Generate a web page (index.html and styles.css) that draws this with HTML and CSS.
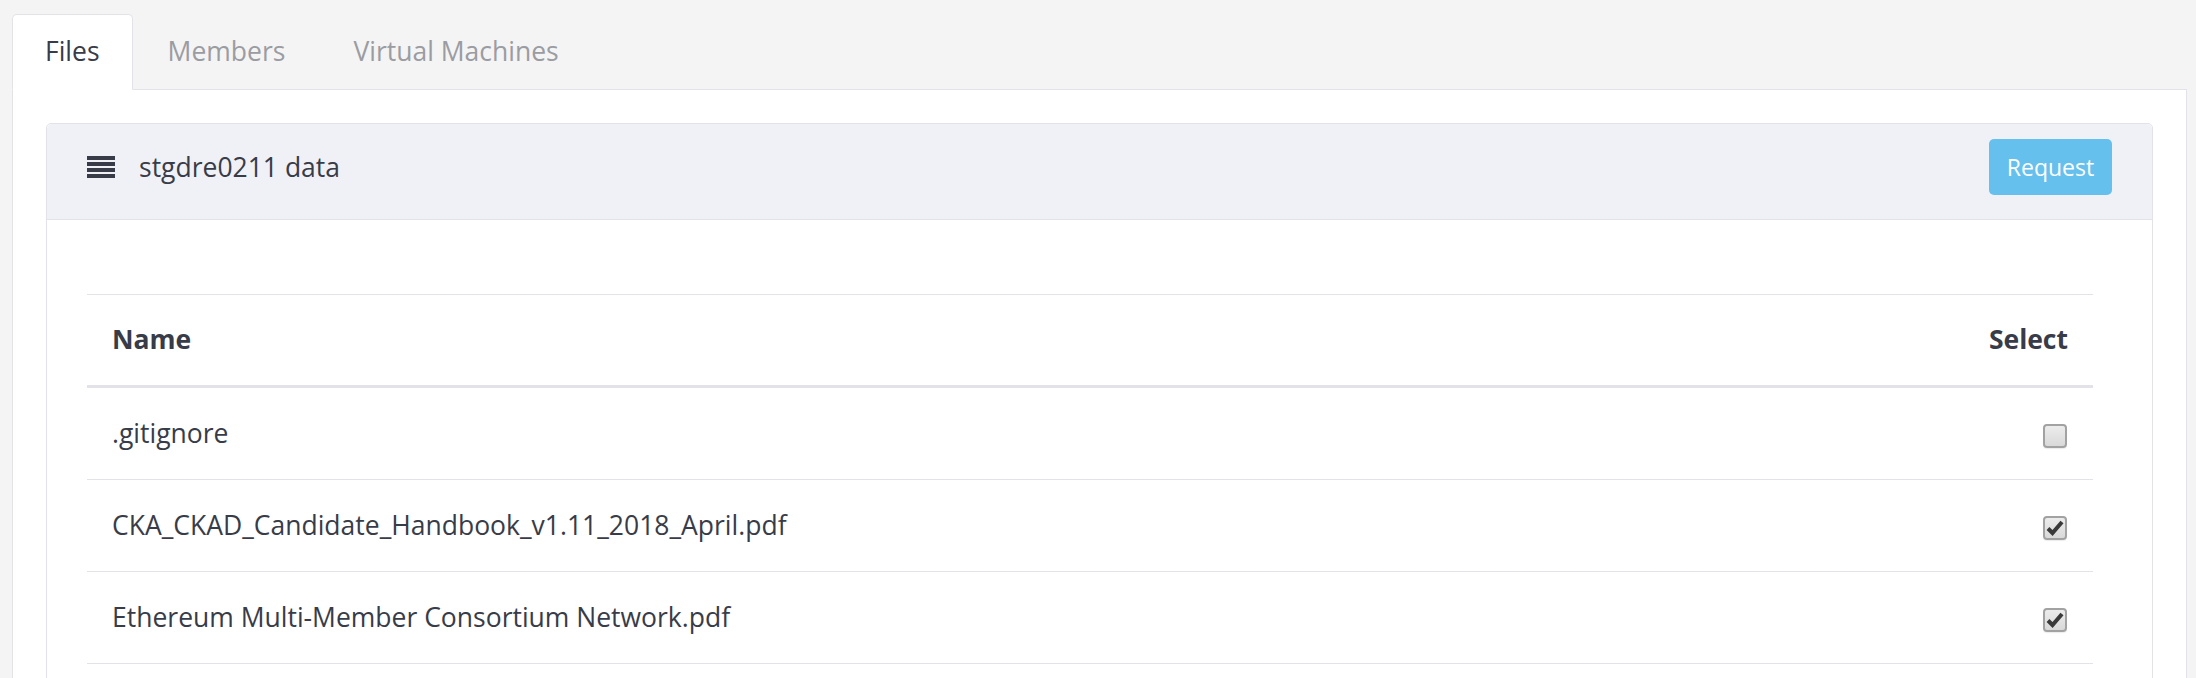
FILE: index.html
```html
<!DOCTYPE html>
<html lang="en">
<head>
    <meta charset="UTF-8">
    <meta name="viewport" content="width=device-width, initial-scale=1.0">
    <title>stgdre0211 data</title>
    <link rel="stylesheet" href="styles.css">
</head>
<body>

<div class="panel">
    <ul class="tabs">
        <li class="tab active">Files</li>
        <li class="tab">Members</li>
        <li class="tab">Virtual Machines</li>
    </ul>

    <div class="tab-content">
        <div class="card">
            <div class="card-header">
                <svg class="list-icon" width="28" height="22" viewBox="0 0 28 22">
                    <rect x="0" y="0" width="28" height="4"/>
                    <rect x="0" y="6" width="28" height="4"/>
                    <rect x="0" y="12" width="28" height="4"/>
                    <rect x="0" y="18" width="28" height="4"/>
                </svg>
                <span class="card-title">stgdre0211 data</span>
                <button class="btn-request" type="button">Request</button>
            </div>
            <div class="card-body">
                <table class="file-table">
                    <thead>
                        <tr>
                            <th>Name</th>
                            <th class="select-col">Select</th>
                        </tr>
                    </thead>
                    <tbody>
                        <tr>
                            <td>.gitignore</td>
                            <td class="select-col"><span class="check"></span></td>
                        </tr>
                        <tr>
                            <td>CKA_CKAD_Candidate_Handbook_v1.11_2018_April.pdf</td>
                            <td class="select-col">
                                <span class="check">
                                    <svg width="22" height="22" viewBox="0 0 22 22"><path d="M4 11.5 L8.5 16 L18 5"/></svg>
                                </span>
                            </td>
                        </tr>
                        <tr>
                            <td>Ethereum Multi-Member Consortium Network.pdf</td>
                            <td class="select-col">
                                <span class="check">
                                    <svg width="22" height="22" viewBox="0 0 22 22"><path d="M4 11.5 L8.5 16 L18 5"/></svg>
                                </span>
                            </td>
                        </tr>
                    </tbody>
                </table>
            </div>
        </div>
    </div>
</div>

</body>
</html>
```

FILE: styles.css
```css
body {
    font-family: "Open Sans", "Noto Sans", sans-serif;
    font-size: 26.5px;
    color: #383c48;
    margin: 0;
    padding: 0;
    background-color: #f4f4f4;
}

.panel {
    margin: 0 9px 0 12px;
}

.tabs {
    display: flex;
    list-style: none;
    margin: 0;
    padding: 14px 0 0 0;
    border-bottom: 1px solid #e2e2e8;
}

.tab {
    height: 76px;
    box-sizing: border-box;
    display: flex;
    align-items: center;
    padding: 0 32px 2px;
    margin-right: 2px;
    margin-bottom: -1px;
    color: #9b9ca2;
    border: 1px solid transparent;
    border-radius: 5px 5px 0 0;
}

.tab.active {
    color: #383c48;
    background-color: #fff;
    border-color: #e2e2e8;
    border-bottom-color: #fff;
}

.tab-content {
    background-color: #fff;
    border: 1px solid #e2e2e8;
    border-top: none;
    padding: 33px;
    min-height: 600px;
}

.card {
    border: 1px solid #e2e2e8;
    border-radius: 5px;
}

.card-header {
    display: flex;
    align-items: center;
    background-color: #f0f1f6;
    border-bottom: 1px solid #e2e2e8;
    border-radius: 5px 5px 0 0;
    padding: 15px 40px 24px 40px;
}

.list-icon {
    fill: #383c48;
    margin-right: 24px;
}

.card-title {
    flex: 1;
}

.btn-request {
    font-family: inherit;
    font-size: 23px;
    color: #fff;
    background-color: #65c0ed;
    border: none;
    border-radius: 5px;
    width: 123px;
    height: 56px;
    padding: 0;
}

.card-body {
    padding: 74px 59px 40px 40px;
}

.file-table {
    width: 100%;
    border-collapse: separate;
    border-spacing: 0;
}

.file-table th,
.file-table td {
    text-align: left;
    line-height: 37px;
    padding: 27px 25px;
}

.file-table th {
    font-weight: bold;
    padding: 26px 25px 27px;
    border-top: 1px solid #e2e2e8;
    border-bottom: 3px solid #e2e2e8;
}

.file-table td {
    border-bottom: 1px solid #e2e2e8;
}

.file-table .select-col {
    text-align: right;
    width: 120px;
}

.check {
    display: inline-block;
    width: 24px;
    height: 24px;
    box-sizing: border-box;
    vertical-align: middle;
    margin-right: 1px;
    border: 2px solid #a2a2a2;
    border-radius: 4px;
    background: linear-gradient(#ececec, #d9d9d9);
    box-shadow: 0 1px 1px rgba(0, 0, 0, 0.08);
}

.check svg {
    display: block;
    margin: -1px 0 0 -1px;
}

.check path {
    fill: none;
    stroke: #3a3a3a;
    stroke-width: 4;
}
```
